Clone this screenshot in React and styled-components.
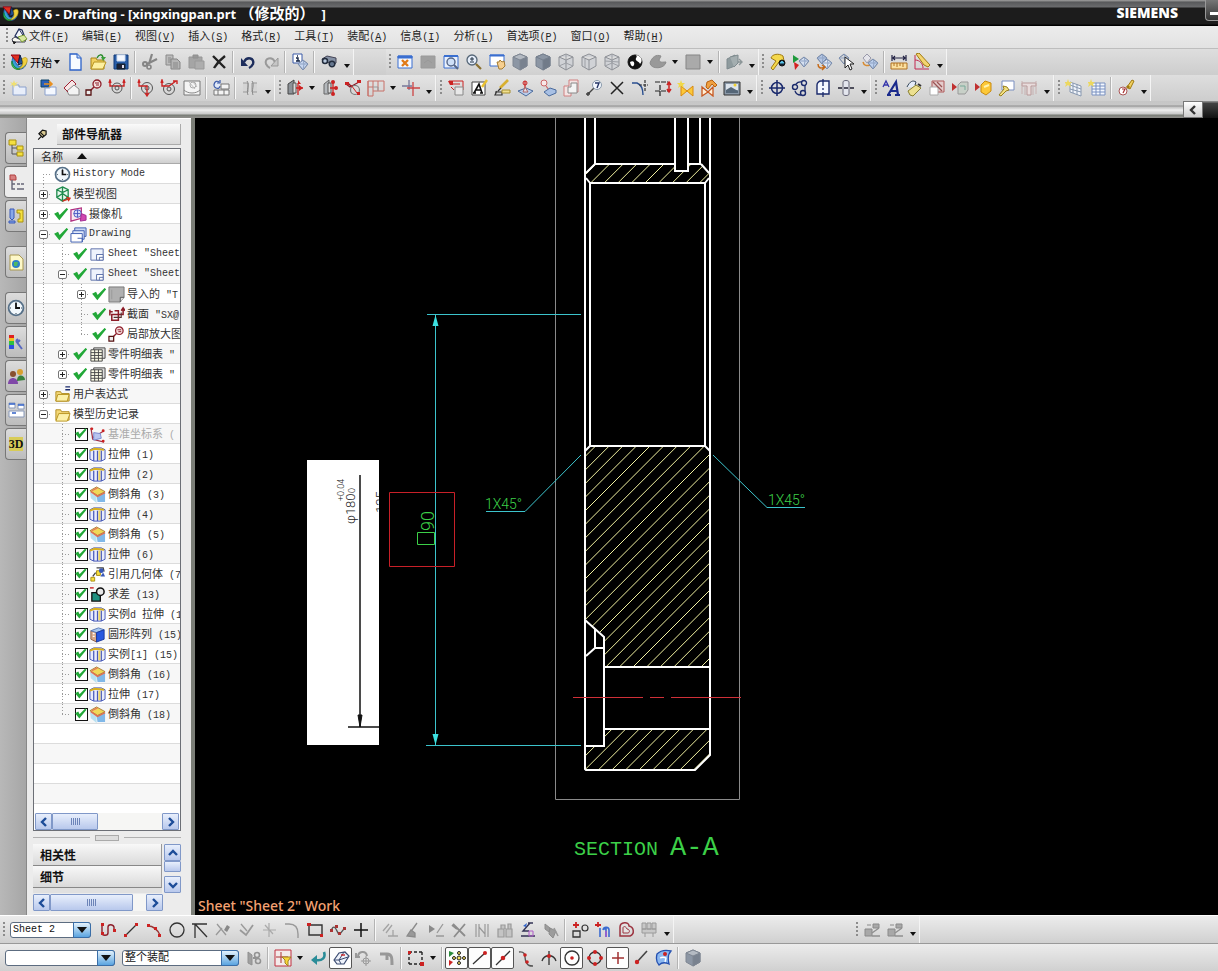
import React from "react";
import styled, { createGlobalStyle, css } from "styled-components";

const GlobalStyle = createGlobalStyle`
  *, *::before, *::after { box-sizing: border-box; }
  body { margin: 0; background: #d4d4d4; }
  button, select, input { font: inherit; margin: 0; padding: 0; }
  ul { list-style: none; margin: 0; padding: 0; }
`;

const MONO = '"Liberation Mono", "Noto Sans CJK SC", monospace';
const CJK = '"Noto Sans CJK SC", sans-serif';

/* ---------- icon set: each entry is a list of [path, stroke, fill, stroke width] ---------- */
const K = "#222", G = "#999", N = "none", R = "#c22", B = "#235", BL = "#3a6fd0", Y = "#e8c030", W = "#fff", LB = "#b8cdec";
const MR = "#8c1c28";
const circ = (x, y, r) => `M${x - r} ${y}a${r} ${r} 0 1 0 ${2 * r} 0a${r} ${r} 0 1 0 ${-2 * r} 0z`;
const cube = (edge, top, left, right) => [
  ["M9 1l7 3v9l-7 4-7-4V4z", edge, left],
  ["M9 7l7-3v9l-7 4z", edge, right],
  ["M9 1l7 3-7 3-7-3z", edge, top],
];
const wire = (extra) => [["M9 1l7 3v9l-7 4-7-4V4zM2 4l7 3 7-3M9 7v10", "#8d9096", "#d0d2d6"], [extra, "#9da0a6", N]];
const diamond = (x, y, fill) => [
  [`M${x} ${y - 5}l5 4-5 6-5-6z`, "#667a9c", fill],
  [`M${x} ${y - 5}l1 4-1 6M${x - 5} ${y - 1}h10`, "#8fa3c4", N],
];
const sheetIcon = [["M2 3h13v12H2z", "#5a6fa8", "#eef2fc"], ["M8 9h7v6H8zM11 12h4M11 12v3", "#5a6fa8", "#fff"]];

const ICONS = {
  nx: [
    ["M3 4c-2 5-1 10 5 12 5 1 9-3 8-8l-4 3c-1 3-3 3-5 1z", "#2460b0", "#38a0d8"],
    ["M1 2l9 0-2 8z", "#901", "#e03020"],
    ["M10 2l3 8-5 2z", "#124", "#245090"],
    ["M12 6c4-3 6-1 5 3s-6 8-11 7c6-1 8-5 6-10z", "#a80", "#f0d040", 0.6],
    ["M2 8c-2 5 3 10 8 8-4 0-7-3-8-8z", "#072", "#40b860", 0.6],
  ],
  modeMenu: [
    ["M2 12l3-2 4 2 7 0-1 3H3z", "#445", "#f8f8f0"],
    ["M5 9l4-7 3 1 2 5-4 4z", "#22305c", "#f4f6fc", 1.3],
    ["M9 2l5 8", "#22305c", N],
    ["M8 10l6-2 3 4-5 3z", "#7a9a38", "#d8e8a0"],
    ["M3 14l1 3 2-2", "#222", "#222"],
  ],
  doc: [["M4 1h7l4 4v12H4z", "#2c62c8", "#f8fbff", 1.3], ["M11 1v4h4", "#2c62c8", "#bcd2f4"]],
  folder: [
    ["M2 5h5l1 2h7v9H2z", "#a88418", "#f0d060"],
    ["M5 9h12l-3 7H2z", "#b89420", "#fdf0a0"],
    ["M8 5c2-4 5-4 6-1", "#2a8a2a", N, 1.5], ["M12 4h5l-3 4z", N, "#3aa03a"],
  ],
  save: [["M2 2h14v14H2z", "#123a78", "#2a5ea8"], ["M5 2h8v6H5z", "#cfdcf0", "#f4f8ff"], ["M5 11h8v5H5z", "#123", "#223"], ["M10 12h2v3h-2z", N, "#dde"]],
  cut: [["M11 1L8 11M16 6L6 11", "#858585", N, 2.2], [circ(4, 11, 2), "#858585", N, 2], [circ(8, 14, 2), "#858585", N, 1.6]],
  copy: [["M2 2h7v10H2z", "#8a8a8a", "#bcbcbc"], ["M4 5h3M4 7h3M4 9h3", "#888", N], ["M7 6h6l3 3v7H7z", "#858585", "#b4b4b4"], ["M9 10h5M9 12h5M9 14h5", "#888", N]],
  paste: [["M2 4h13v11H2z", "#979797", "#a5a5a5"], ["M6 2h5v3H6z", "#909090", "#999"], ["M8 8h9v8H8z", "#999", "#adadad"]],
  del: [["M3 3l12 12M15 3C11 6 7 10 4 15", "#222", N, 2.4]],
  undo: [["M5 9c3-6 11-4 9 2-1 2-2 3-4 4", "#1d2d5c", N, 2.4], ["M2 5v8h7z", N, "#1d2d5c"]],
  redo: [["M13 9C10 3 2 5 4 11c1 2 2 3 4 4", "#999", N, 2], ["M16 5v8H9z", "#999", "#c6c6c6"]],
  info: [["M2 1h9v9H2z", "#3a5aa8", "#fff"], ["M6 3h1M5 5h2v3M5 8h4", "#124", N, 1.4], ...diamond(12, 12, "#c6d6f0")],
  find: [["M2 6l5-3 9 2v5l-3 2-3-3-4 1-3-1z", "#445", "#8490a4"], [circ(5, 8, 2.5), "#222c3c", "#b8c8dc", 1.5], [circ(12, 11, 2.8), "#222c3c", "#667890", 1.5]],
  fit: [["M2 3h14v12H2z", "#3a6fd0", "#f4f8ff"], ["M2 3h14v2H2z", BL, BL], ["M6 7l6 6M12 7l-6 6", "#e07a18", N, 2.4]],
  grayBox: [["M2 3h14v12H2z", "#9a9a9a", "#a0a0a0"], ["M5 10l4-3 4 3", "#999", N]],
  zoomWin: [["M2 3h14v12H2z", BL, "#e8f0fc"], [circ(9, 9, 4), "#568", "#cfe0f8", 1.4], ["M12 12l4 4", "#568", N, 2], ["M2 3h14", BL, N, 2]],
  zoom: [[circ(7, 7, 5), "#567", "#e6eefa", 1.3], ["M7 4v4M5 6h4M5 9h4", "#234", N], ["M11 11l5 5", "#8a7030", N, 2.2]],
  pan: [["M2 2h14v11H2z", BL, "#fff"], ["M2 2h14v1H2z", BL, BL], ["M9 9l2 0 1-2 2 2 2-1 1 5-3 3h-3z", "#a67c30", "#f6cf90"]],
  cubeA: cube("#7e8692", "#b4bac2", "#8c96a4", "#79828f"),
  cubeB: cube("#76808e", "#8c96a4", "#8c96a4", "#717b89"),
  wireA: wire("M9 1v9M2 13l7-3 7 3"),
  wireB: wire("M5 6v9"),
  wireC: wire("M9 1v9M2 13l7-3 7 3M2 8l14 1"),
  yin: [[circ(9, 9, 7), "#111", "#111"], ["M10 2c6 1 7 6 4 9-1-3-3-2-4-4s2-3 0-5z", N, W], ["M4 9c3-2 5 0 4 3-1 2-3 2-4-3z", N, W]],
  blob: [["M1 10C3 4 7 1 12 3L10 7c1 3 3 2 7 2-1 7-15 8-16 1z", "#8c8c8c", "#999"]],
  square: [["M2 2h14v14H2z", "#858585", "#aaa"]],
  section: [["M2 6l8-4v11l-8 3z", "#7e8a8e", "#8f9b9e"], ["M9 9h8M14 6l3 3-3 3", "#8c9698", N, 1.4], ["M5 4l8-2v8l-4 4", "#7e8a8e", "#a4aeb0"]],
  wrench: [["M2 5c1-4 8-5 12-2l1 5-5 1-6 8-2-2 5-7z", "#a07a10", "#f4d84c"], [circ(13, 10, 3), "#111", "#123"], ["M11 10h4l-2-2z", "#5bd", "#6cf", 1]],
  run: [["M1 2l6 4-6 4z", N, "#1e9a3c"], ["M2 9l5 3-4 5z", N, "#d42020"], ...diamond(12, 9, "#d4dff0")],
  swap: [...diamond(7, 6, "#b4c6e4"), ...diamond(12, 11, "#dfe7f4"), ["M3 11c0 4 3 5 6 3M7 12l3 2-3 3", "#c66a18", N, 1.5]],
  pick: [...diamond(6, 6, "#d8d8d8"), ["M7 4v11l3-3 2 5 2-1-2-5h4z", "#222", "#fff"]],
  swap2: [["M6 1l4 4-4 5-4-5z", "#99a", "#e4e4ea"], ["M2 9c1 4 4 4 7 3", "#d88a30", N, 1.5], ...diamond(12, 11, "#bcd0ee")],
  measure: [["M2 2v6M16 2v6M2 5h14M5 3L3 5l2 2M13 3l2 2-2 2", "#224", N, 1.2], ["M1 10h16v6H1z", "#b07020", "#fbe0a0"], ["M4 10v3M7 10v4M10 10v3M13 10v4", "#b07020", N]],
  angle: [["M2 2v14h14M2 7c5 0 8 4 8 8", "#c22850", N], ["M3 1l3-1 11 12-2 2-4-2z", "#a07a10", "#f4d470"]],
  /* second row */
  sheetNew: [["M3 6h6v2h7v8H3z", "#8aa0cc", "#e8eefa"], ["M4 1l1 3 3-1-2 2 2 2-3-1-1 3-1-3-3 1 2-2-2-2 3 1z", N, "#f0e070"]],
  viewAdd: [["M2 1h8v7H2z", "#146", "#2a60b8"], ["M5 5h7M10 2l3 3-3 3", "#e89020", N, 1.6], ["M6 9h5v-1h6v8H6z", "#8aa0cc", "#f4f8ff"]],
  projView: [["M2 9l8-8 4 4-8 8z", "#a02030", "#f8e8e8"], ["M5 12l7-6 5 4v6H7z", "#888", "#f4f4f4"], ["M2 9l4 4", "#a02030", N]],
  detail: [[circ(12, 5, 4), MR, "#f4dede", 1.3], ["M9 8l-4 4", MR, N, 1.4], ["M1 11h5v5H1z", "#511", "#eee", 1.3], ["M10 4h4M11 6h3", MR, N]],
  secA: [["M2 3v4h14V3M1 4l1-3 1 3M15 4l1-3 1 3", R, N, 1.4], [circ(9, 9, 5), "#555", N], [circ(9, 9, 2), "#555", N]],
  secB: [[circ(10, 9, 5.5), "#555", N], [circ(10, 9, 2), "#555", N], ["M2 2v5h8v9M1 4l1-3 1 3M8 14l2 3 2-3", R, N, 1.3]],
  secC: [[circ(9, 10, 5.5), "#555", N], [circ(9, 10, 2), "#555", N], ["M2 2v5h7l7-5M13 2h4v3M1 4l1-3 1 3", R, N, 1.4]],
  breakout: [["M1 2h16v14H1z", "#777", "#f4f4f4"], ["M1 11c4 4 12 4 16 0", "#888", N], [circ(10, 6, 3), "#aaa", N], ["M6 3l6 7M10 3l4 5", "#bbb", N]],
  update: [["M7 3c-4-3-7 4-3 6 2 1 4 0 4-2M8 1v3H5", "#3a5aa8", "#dfe8f8", 1.2], ["M9 5h8v5H9zM2 11h15v5H2zM6 11v5M12 11v5", "#777", "#f4f4f4"]],
  brk: [["M2 4h5v9H2M16 4h-5v9h5", "#999", "#d4d4d4"], ["M6 2c3 4-1 9 1 14M11 2c3 4-1 9 1 14", "#888", N]],
  dimA: [["M2 5l6-4v14H2z", "#444", "#8c9298"], ["M7 4h3v10H7z", "#555", "#dcdcdc"], ["M12 4v12M10 9h7", R, N, 1.3], ["M12 1l3 4h-3zM13 6l4 3-4 3z", N, R]],
  dimB: [["M3 5l5-4v14H3z", "#666", "#b4b8bc"], ["M7 4h3v10H7z", "#555", "#dcdcdc"], ["M12 3v12M9 9h7", R, N, 1.3], [circ(12, 3, 2), N, R], [circ(15, 9, 2), N, R], [circ(12, 15, 2), N, R]],
  radius: [["M2 5l4 3 9-5M4 4l4 4", MR, N, 1.2], [circ(11, 11, 4.5), "#777", N, 1.2], ["M13 14l-6-8", R, N], ["M1 3h4v3H1zM13 1h4v3h-4zM13 13h3v3h-3z", N, R]],
  ordinate: [["M1 2h16v10H6v5H1zM1 8h5M6 2v10M1 2v15M11 2v10", "#c87068", N], ["M6 8h5v4", "#999", N]],
  crosshair: [["M7 1v10M0 7h10", "#779", N, 1.3], ["M11 3v14M5 9h13", "#c44", N, 1.3]],
  note: [["M2 2h14v9H9M5 5h8M4 8l3 3", R, N], ["M8 8h8v8H8z", "#888", "#e8e8e8"], ["M1 2h5v4H3z", N, R]],
  textA: [["M2 3h13v13H2z", "#444", "#fff"], ["M4 14l5-9 3 9M6 11h5M3 14h3M10 14h3", "#111", N, 1.6], ["M17 1l-5 7", Y, N, 2.4]],
  pencil: [["M15 1L7 9", "#d8b030", N, 2.6], ["M2 13h7v3H2l2-4M8 9l-3 3", "#333", N, 1.2], ["M9 11h8v3H9z", "#a89030", "#f0e090"]],
  datum: [["M2 12l8-3 7 3-7 5z", "#4a6a9c", "#b8ccec"], ["M9 2v9", R, N, 1.2], [circ(9, 4, 2), R, N], ["M7 13l2-5 3 5z", "#a66", "#e8e0e8"]],
  balloon: [[circ(5, 4, 3), "#c66", "#f8e8e8"], ["M7 7l3 4", "#c66", N, 1.2], ["M5 13l6-4 6 2v3l-7 3z", "#4a6a9c", "#a8c0e4"]],
  area: [["M2 7h5V1h9v12H9v4H2z", "#d08080", "#f4e4e4"], ["M6 8h3V4h6v10H6z", "#888", "#f4f4f4"]],
  ident: [["M2 16l8-8M1 15h4M3 13v4", "#444", N, 1.4], [circ(12, 6, 4.5), "#89a", "#f4f8ff"], ["M10 4h4l-2 5", "#236", N, 1.4]],
  cross: [["M3 3l12 12M15 3L3 15", "#222", N, 1.5]],
  trim: [["M1 4h5c5 2 6 6 6 12", "#2a4f90", N, 1.4], ["M14 1v11M8 6h9", "#333", N, 1.2, "3 1"]],
  sym: [["M1 3h13M1 12h14M6 6v11", "#222", N, 1.2, "5 1"], ["M15 3v10M13 6l2-3 2 3M13 10l2 3 2-3", R, N, 1.5]],
  weld: [["M4 7l6 5-6 5zM16 7v10l-6-5z", "#d88a10", "#fcc838"], ["M4 1l1 3h3L6 6l1 3-3-2-3 2 1-3-2-2h3z", N, "#f0d848"]],
  hammer: [["M2 8l6 5-6 4zM13 8v9l-5-4z", "#c85820", "#fff0d8", 1.3], ["M7 3l5-2 5 5-2 2-3-3-4 5-2-2z", "#b86010", "#f0a040"]],
  image: [["M1 3h16v13H1z", "#333", "#8a98a8"], ["M3 5h12v6H3z", N, "#dde4ec"], ["M3 11l5-3 7 4v2H3z", N, "#567"], [circ(12, 6, 1.5), N, "#f0d030"]],
  center: [[circ(9, 9, 5.5), "#1a2a6c", N, 1.5], ["M9 1v16M1 9h16", "#1a2a6c", N, 1.5]],
  bolt: [["M5 5a6 6 0 0 1 6-2M4 12a6 6 0 0 0 6 4M14 6v6", "#1a2a6c", N, 1.3], [circ(4, 8, 2.5), "#1a2a6c", N, 1.4], [circ(13, 4, 2.5), "#1a2a6c", N, 1.4], [circ(12, 14, 2.5), "#1a2a6c", N, 1.4]],
  symline: [["M3 15V6c0-2 2-4 4-4h8v13z", "#1a2a6c", "#f4f8ff", 1.4], ["M9 0v7M9 9v2M9 13v5", "#1a2a6c", N, 1.3]],
  cyl: [["M6 3c0-2 6-2 6 0v12c0 2-6 2-6 0z", "#667", "#e4e6ee"], ["M1 9h4M7 9h4M13 9h4", "#223", N, 1.4]],
  fontA: [["M1 8l3-6 3 6M2 6h4", "#33a", N, 1.3], ["M6 16l8-13 2 13M9 12h7M5 16h4M13 16h5", "#1a2a8c", N, 2.2]],
  styleW: [["M2 8c3-6 6-7 9-5l-1 3 3 2", "#345", "#e4ecf8"], ["M3 12l8-6 5 3-8 8-3-1z", "#888030", "#ece090"], ["M13 5l3 2", "#333", N, 2]],
  sheetEd: [["M4 2h12v11H4z", "#b05858", "#e4cccc"], ["M2 8h8v8H2z", "#aaa", "#fff"], ["M5 3l9 9M9 3l5 5", "#955", N, 1.3]],
  camA: [["M1 4l5 4-5 4z", N, "#c03030"], ["M7 6l3-3h7v8l-3 4H7z", "#999", "#c8d0c8"], ["M9 7h5v4", "#7a9", N]],
  camB: [["M1 4l5 4-5 4z", N, "#c03030"], ["M7 6l4-4 6 2v8l-5 4-5-3z", "#c88a10", "#fcc838"], ["M10 8l5-2", "#fff3b0", N, 2]],
  wrenchB: [["M5 2h12v9H5z", "#7a8fc0", "#fff"], ["M2 16l5-6-1-3 4 1 2 3-3 1-5 5z", "#98801c", "#f4e080"]],
  tee: [["M2 4h14v3h-5v9H7V7H2z", "#b89898", "#e8dcdc"], ["M2 2v13M16 2v13M5 8v8M13 8v8", "#c8b0b0", N]],
  tabA: [["M5 3l11 4v10L5 13zM8 4v10M12 5v11M5 6l11 4M5 10l11 3", "#8898b0", "#f0f4fa"], ["M3 0l1 3 3 0-2 2 1 3-3-2-3 2 1-3-2-2h3z", N, "#ecd860"]],
  tabB: [["M4 4h13v12H4zM4 7h13M4 10h13M4 13h13M8 4v12M12 4v12", "#7890c0", "#f4f8ff"], ["M3 0l1 3 3 0-2 2 1 3-3-2-3 2 1-3-2-2h3z", N, "#ecd860"]],
  paintQ: [["M10 8l5-7 2 1-4 8z", "#a07a10", "#f0d060"], [circ(6, 12, 4), "#a55", "#fff"], ["M5 10h3l-2 4", "#a33", N, 1.2], ["M10 9l2-2", "#a07a10", N, 3]],
  /* sketch toolbar */
  profile: [["M3 3v9c0 3 6 3 6 0V6c0-3 5-3 6 0v3", MR, N, 1.4], ["M2 2h3v3H2zM2 11h3v3H2zM14 8h3v3h-3z", N, R]],
  line: [["M3 15L15 3", "#333", N, 1.3], ["M2 13h3v3H2zM13 2h3v3h-3z", N, R]],
  arc: [["M3 5c6 0 9 3 12 9", "#933", N, 1.3], ["M2 3h3v3H2zM9 6h3v3H9zM13 13h3v3h-3z", N, R]],
  circle: [[circ(9, 9, 7), "#333", N, 1.3]],
  corner: [["M1 3h15M4 3v14M4 3l12 13", "#333", N, 1.3]],
  grayTrim: [["M3 3l9 11M2 14l6-7", "#999", N, 1.3], ["M10 9l3-5 3 2-3 5z", N, "#888"]],
  grayExt: [["M3 9l6 5 7-10", "#999", N, 1.8], ["M4 3l6 7", "#999", N, 1.3]],
  grayCross: [["M9 2v14M3 9h13M5 4l8 9", "#aaa", N, 1.2]],
  fillet: [["M2 3h4c6 0 9 4 9 10v4", "#999", N, 1.4]],
  rect: [["M3 4h13v10H3z", "#333", N, 1.4], ["M1 2h4v3H1zM14 13h3v3h-3z", N, R]],
  spline: [["M2 10c3-8 5-2 7 2s4-3 7-5", "#555", N, 1.3], ["M1 8h3v3H1zM6 4h3v3H6zM9 11h3v3H9zM14 6h3v3h-3z", N, "#a33"]],
  plus: [["M9 2v14M2 9h14", "#111", N, 1.5]],
  par: [["M2 10l6-7M5 12l6-8M7 15h10M12 15V9", "#a4a4a4", N, 1.3]],
  con1: [["M3 15l4-6 4 3v4zM8 9l5-7", "#8a8a8a", "#999", 1.3]],
  con2: [["M2 4l6 4-6 4z", N, "#8a8a8a"], ["M16 3l-6 9M9 15h8", "#999", N, 1.3]],
  con3: [["M3 3l12 12M15 3L4 16M2 4l5 4", "#8c8c8c", N, 1.8]],
  con4: [["M3 3v13M6 3v13M12 3v13M15 3v13M6 6l6 7", "#999", "#bbb", 1.2]],
  con5: [["M2 8h6v8H2zM10 8h6v8h-6zM5 8V4h4v4M12 8V3h3v5", "#999", "#c4c4c4", 1.2]],
  con6: [["M11 2L4 10h6M9 2h5M2 15h14", "#335", N, 1.4], ["M10 10h4v5h-4z", "#b05ac8", N], ["M4 5l4-3-1 4z", N, "#36c"]],
  con7: [["M3 3l5 4-1 4-4-3zM8 7l6 3-3 7-4-4z", "#8c8c8c", "#9c9c9c"], ["M12 7l4 8", "#999", N, 1.5]],
  add1: [["M5 1v6M2 4h6", R, N, 1.8], ["M2 10h7v6H2z", "#333", N, 1.3], [circ(14, 7, 3), "#333", N, 1.2]],
  add2: [["M4 1v5M1 4h6", R, N, 1.8], ["M6 7v9M9 8h3v8M15 16V9c0-3-5-4-6 0", "#3a6ad0", N, 1.6], ["M12 10v6", "#a5c", N, 1.4]],
  offset: [["M3 15V6c0-5 9-6 9-1 5 1 6 8 1 10z", "#9c3440", N, 1.5], ["M6 12V7c0-2 3-2 4 1 3 0 3 4 1 4z", "#9c3440", "#e4e4e4"]],
  grayHatch: [["M2 2h4v6H2zM7 2h4v6H7zM12 2h4v6h-4zM2 8h14v4H2zM5 12v4M13 12v4", "#9a9a9a", "#c8c8c8"]],
  anim: [["M2 8h7v7H2zM4 4h4M10 3h6v4h-6z", "#8a8a8a", "#a8a8a8"], ["M9 12l7-5M9 15h8", "#909090", N, 1.5]],
  /* selection toolbar */
  links: [["M3 3v11l4 2V6z", "#909090", "#a0a0a0"], [circ(12, 6, 2.5), "#929292", N, 1.6], [circ(13, 12, 2.5), "#929292", N, 1.6], ["M8 9h3", "#929292", N, 2]],
  selRect: [["M1 1h16v16H1z", "#c03040", "#f4eaea"], ["M7 3v11M2 8h12", "#a33", N], ["M8 8h9l-3 4v5l-3-3v-3z", "#a08020", "#f8d838"]],
  back: [["M15 3c2 6-2 9-8 8", "#2a8c98", N, 2.6], ["M8 6v10l-6-5z", N, "#2a8c98"]],
  eraser: [["M2 11l5-7 6-1 4 4-5 8H5z", "#3a4a70", "#eef2fa", 1.2], ["M2 11h5l5-8M7 11l2 4M7 11l9-3", "#3a4a70", N], ["M9 6l4 0", R, N, 1.4]],
  rot: [["M3 8c0-6 8-7 9-1M5 8H1V4", "#999", N, 2], [circ(11, 12, 3), "#999", N], ["M11 7v10M6 12h10", "#999", N]],
  hookG: [["M2 5h7c5 0 5 4 5 11M9 5v6", "#989898", N, 3]],
  marquee: [["M2 3h13M2 3v12M15 3v12M2 15h13", "#222", N, 1.4, "3 2"], ["M13 13h4v4h-4zM1 2h3v3H1z", N, R]],
  snap: [["M1 2l5 2-5 4z", N, "#2a8a3a"], ["M1 11l4 2-4 4z", N, "#c22"], [circ(11, 9, 2), "#222", "#f8e060"], [circ(11, 4, 1.5), "#222", "#f8e060"], [circ(11, 14, 1.5), "#222", "#f8e060"], [circ(6, 9, 1.5), "#222", "#f8e060"], [circ(16, 9, 1.5), "#222", "#f8e060"]],
  endPt: [["M2 15L14 4", "#333", N, 1.3], [circ(14, 4, 2), N, R]],
  midPt: [["M2 16L16 2", "#333", N, 1.3], [circ(9, 9, 2.3), N, R]],
  tan: [["M2 3c8-1 5 6 7 10s4 4 7 4", "#555", N, 1.4], [circ(8, 6, 1.8), N, R], [circ(10, 13, 1.8), N, R]],
  inter: [["M9 2v14M2 12c2-7 12-7 14 0", "#333", N, 1.3], [circ(9, 7, 2), N, R]],
  cen: [[circ(9, 9, 7), "#333", N, 1.4], [circ(9, 9, 1.8), N, R]],
  quad: [[circ(9, 9, 6), "#333", N, 1.3], [circ(9, 3, 2), N, R], [circ(9, 15, 2), N, R], [circ(3, 9, 2), N, R], [circ(15, 9, 2), N, R]],
  exist: [["M9 3v12M3 9h12", "#a03030", N, 1.5]],
  onCurve: [["M15 2L5 13", "#444", N, 1.6], [circ(5, 13, 2.2), N, R]],
  face: [["M2 5C6 1 12 1 16 2c-3 3-3 9-2 13-4-2-8-1-10 1C1 13 1 9 2 5z", "#2450b0", "#8cb8f0", 1.3], [circ(10, 5, 2), N, R], ["M5 9c2-1 4-1 6 0l-1 4", "#fff", N, 1.3]],
  /* navigator */
  clock: [[circ(9, 9, 7.4), "#567088", "#f2f8fc", 1.8], ["M9 4v5h4", "#111", N, 1.8], ["M9 3v1M9 14v1M3 9h1M14 9h1", "#345", N]],
  modelView: [["M9 1l6 3v8l-6 4-6-4V4zM3 4l6 3 6-3M9 7v9M3 12l6-4 6 4M9 1v7", "#1e8a4c", "#e8f8ee", 1.4], ["M9 16l8-3M13 12l4 1-2 3", "#d03020", N, 1.4]],
  camera: [["M1 4l11-2v11L1 16z", "#b03080", "#fbe8f0", 1.3], [circ(8, 8, 4), "#4a58c0", "#d8dcf8"], ["M4 8h7M8 4v8", "#4a58c0", N], ["M12 8l5 2v5l-6 1z", "#a02890", "#d048b0"]],
  drawing: [["M5 2h12v9H5z", "#3c5cb0", "#c8d6f2"], ["M3 5h12v9H3z", "#3c5cb0", "#dfe8fa"], ["M1 8h12v9H1z", "#3c5cb0", "#fff"], ["M8 13h5v4", "#3c5cb0", N]],
  sheet: sheetIcon,
  imported: [["M1 1h16v11l-4 5H1z", "#777", "#b0b0b0"], ["M17 12h-4v5", "#555", "#ddd"], ["M4 4v10", "#999", N]],
  secView: [["M2 6h3M2 4v6M4 9h7v6H4zM11 9h5V3M14 5l2-3 2 3M11 9V5H7", MR, N, 1.6], ["M6 12h8V7", "#533", N, 1.2]],
  table: [["M5 2h12v11H5z", "#444", "#ddd"], ["M2 4h12v12H2zM2 7h12M2 10h12M2 13h12M6 4v12M10 4v12", "#444", "#fdfde8"]],
  expr: [["M2 6h5l1 2h8v8H2z", "#b08c20", "#f4d878"], ["M4 9h12l-2 7H2z", "#b89420", "#fcf0a8"], ["M12 1h5M12 4h5", "#1a2a6c", N, 1.4]],
  hist: [["M2 4h5l1 2h8v9H2z", "#b08c20", "#f4d878"], ["M5 8h12l-3 8H2z", "#b89420", "#fcf0a8"]],
  csys: [["M2 2l2 12 12 3M3 13l13-8", "#a03048", N, 1.3], ["M5 7l7 1 1 5-8 2z", "#7a88d0", "#b8c4f0"], [circ(3, 3, 1.5), N, R], [circ(15, 5, 1.5), N, R], [circ(15, 16, 1.5), N, R]],
  extrude: [["M1 4l4-2h8l4 2v10l-4 2H5l-4-2z", "#4658b8", "#e8ecfc"], ["M1 5l5-2 10 1", "#d8b020", N, 2], ["M5 5v11M9 5v11M13 5v11", "#4658b8", N, 1.3], ["M10 5h2v10h-2z", N, "#f0d860"]],
  chamfer: [["M1 6l7 5v7l-6-5z", N, "#b8e0f0"], ["M8 10l9-3v10H9z", N, "#80b8e8"], ["M1 5l7-4 9 5-8 4z", "#a88038", "#f0d858"], ["M2 6l7 5 8-4", "#e07050", N, 1.6], ["M3 5l6-3", "#e87858", N, 1.4]],
  refGeo: [["M2 12h4v4H2zM8 5h4v5H8z", "#a88c10", "#f8e040"], ["M8 2l7 0 1 4M4 11l3-4", "#444", N, 1.4], [circ(13, 5, 2.5), N, "#3858b8"], ["M12 11h5l-2-4z", N, "#3858b8"]],
  subtract: [["M3 7h9v9H3z", "#111", "#209080", 1.4], [circ(12, 6, 4), "#111", "#e8e8e8", 1.6], ["M1 2h4", R, N, 1.5]],
  pattern: [["M2 5l6 2v10l-6-3z", "#8a6048", "#d8a888"], ["M2 5l8-3 6 2-8 3z", "#5878b8", "#a8c8f0"], ["M8 7l8-3v10l-8 3z", "#1838a0", "#2858e0"], ["M4 8h2M4 11h2", "#fff", N, 1.5]],
  check: [["M2 9l4 5L15 3l-9 9-2-4z", "#22a838", "#22b03c", 2.4]],
  pin: [["M4 8l5-5 5 1 0 5-5 4z", "#111", "#d8c890", 1.6], ["M7 12l-4 4M6 6l5 5", "#111", N, 1.6]],
  /* resource tabs */
  asm: [["M2 1h7v5H2zM10 7h6v4h-6zM10 13h6v4h-6z", "#a89010", "#f4e040"], ["M5 6v9h5M5 9h5", "#555", N]],
  part: [["M3 2h5l1 2v3H3z", "#b04040", "#d88080"], ["M5 7v9h3M5 11h3M10 11h3M14 11h3M10 16h7", "#667", N, 1.4]],
  reuse: [["M3 2h4v9l-2 2-2-2zM2 14h6v2H2z", "#3858b8", "#88a8e8"], ["M10 3h6v12h-5v-3h2V6h-3z", "#a89010", "#f4e040"]],
  web: [["M3 2h9l4 4v11H3z", "#a89850", "#fdf8c8"], [circ(9, 11, 4), N, "#2c80c8"], ["M7 9l4 0-1 4-3 0z", N, "#50b860"]],
  roles: [["M2 2h5v3H2z", N, "#e02020"], ["M2 5h5v3H2z", N, "#f0c020"], ["M2 8h5v4H2z", N, "#30c040"], ["M2 12h5v4H2z", N, "#3050e0"], ["M9 8l6 8M9 8l2-2M13 7l-3 3", "#5868c0", N, 2]],
  users: [[circ(6, 7, 3), N, "#885030"], ["M1 17c0-8 10-8 10 0z", N, "#8048a8"], [circ(13, 5, 3), N, "#d8a030"], ["M10 14c0-8 8-6 8-1z", N, "#38803c"]],
  winP: [["M2 2h6v5H2zM11 3h6v5h-6zM2 10h15v6H2z", "#8898b8", "#fff"], ["M2 3h6M11 4h6M5 12h4", "#3060c8", N, 1.6]],
};

const Svg = styled.svg`
  display: block;
  flex: none;
  width: ${(p) => p.$size || 18}px;
  height: ${(p) => p.$size || 18}px;
`;

function Icon({ name, size }) {
  return (
    <Svg viewBox="0 0 18 18" $size={size} aria-hidden="true">
      {ICONS[name].map(([d, stroke, fill, w, dash], i) => (
        <path key={i} d={d} stroke={stroke} fill={fill} strokeWidth={w || 1} strokeDasharray={dash} />
      ))}
    </Svg>
  );
}

/* Chinese runs are set one size larger than the monospaced Latin beside them */
const Han = styled.span`
  font-family: ${CJK};
  font-size: 11px;
`;
function Mixed({ text }) {
  return text.split(/([\u4e00-\u9fff]+)/).map((part, i) => (i % 2 ? <Han key={i}>{part}</Han> : part));
}

/* ---------- frame ---------- */
const Window = styled.div`
  display: flex;
  flex-direction: column;
  min-height: 100vh;
  overflow: hidden;
  background: #d6d6d6;
  color: #222;
  font: 10px/16px ${MONO};
`;
const TitleBar = styled.header`
  display: flex;
  align-items: center;
  height: 26px;
  padding: 0 0 0 2px;
  background: linear-gradient(#999 0, #8a8a8a 1px, #58595b 2px, #6a6b6d 7px, #1c1c1c 8px, #1c1c1c 24px, #000 25px);
  color: #fff;
`;
const Title = styled.h1`
  flex: 1;
  margin: 0 0 0 3px;
  white-space: pre;
  font: bold 13px/20px "Noto Sans", "Noto Sans CJK SC", sans-serif;
`;
const TitleHan = styled.span`
  font-size: 15px;
`;
const Brand = styled.span`
  margin-right: 27px;
  font: 800 14px/20px "Open Sans", sans-serif;
`;
const Minimize = styled.button`
  align-self: flex-start;
  display: flex;
  align-items: flex-end;
  width: 13px;
  height: 21px;
  padding: 0 0 5px 4px;
  border: 1px solid #999;
  border-width: 0 0 1px 1px;
  border-radius: 0 0 0 4px;
  background: linear-gradient(#777, #333);
  &::after { content: ""; width: 8px; height: 3px; background: #fff; }
`;
const MenuBar = styled.nav`
  display: flex;
  align-items: center;
  gap: 13px;
  height: 23px;
  padding: 0 6px 2px 3px;
  border-bottom: 1px solid #bdbdbd;
  background: linear-gradient(#ececec, #e2e2e2);
`;
const MenuLead = styled.span`
  display: flex;
  align-items: center;
  margin-right: -12px;
`;
const MenuItem = styled.button`
  border: 0;
  background: none;
  color: #222;
  white-space: nowrap;
  line-height: 16px;
`;
const Bars = styled.div`
  display: flex;
  flex-direction: column;
`;
const Bar = styled.div`
  display: flex;
  height: 26px;
  background: linear-gradient(#dedede, #cdcdcd);
`;
const Group = styled.div`
  display: flex;
  align-items: center;
  flex: none;
  height: 26px;
  margin-left: ${(p) => p.$gap || 0}px;
  border-right: ${(p) => (p.$open ? 0 : 1)}px solid #f4f4f4;
  background: linear-gradient(#e4e4e4, #d0d0d0);
`;
const Grip = styled.span`
  flex: none;
  width: 7px;
  height: 16px;
  background: radial-gradient(circle at 1px 1px, #8c8c8c 1px, transparent 1px) 3px 0 / 4px 4px repeat-y;
`;
const Tool = styled.button`
  display: flex;
  align-items: center;
  justify-content: center;
  flex: none;
  width: 23px;
  height: 22px;
  border: 1px solid transparent;
  border-radius: 2px;
  background: none;
  ${(p) => p.$on && css`
    border-color: #555;
    background: #fdfdfd;
  `}
`;
const StartButton = styled(Tool)`
  width: 56px;
  justify-content: flex-start;
  gap: 2px;
  padding-left: 2px;
`;
const Caret = styled.span`
  width: 0;
  border: 3px solid transparent;
  border-top: 4px solid #111;
  border-bottom: 0;
`;
const Drop = styled.button`
  display: flex;
  justify-content: center;
  align-items: center;
  flex: none;
  width: ${(p) => (p.$end ? 13 : 12)}px;
  height: 22px;
  padding-top: ${(p) => (p.$end ? 8 : 0)}px;
  border: 0;
  background: none;
`;
const Divider = styled.span`
  flex: none;
  width: 6px;
  height: 22px;
  background: linear-gradient(90deg, transparent 2px, #b4b4b4 2px, #b4b4b4 3px, #f8f8f8 3px, #f8f8f8 4px, transparent 4px);
`;
const BarEdge = styled.div`
  display: flex;
  height: 17px;
  background: linear-gradient(#c6c6c6 0, #c8c8c8 4px, #8f8f8f 5px, #c2c2c2 6px, #dcdcdc 8px, #f0f0f0 9px, #d8d8d8 11px, #c8c8c8 13px, #777b74 14px, #8c8c88 16px);
  justify-content: flex-end;
`;
const Collapse = styled.button`
  width: 20px;
  height: 17px;
  border: 1px solid #777;
  background: linear-gradient(#fff, #ccc);
  display: grid;
  place-items: center;
`;
const EdgeEnd = styled.span`
  width: 15px;
  background: linear-gradient(#888 1px, #444 2px, #111);
`;

/* "|" divider, ">" drop arrow, "." overflow arrow, "*" prefix marks a pressed tool */
function Tools({ list }) {
  return list.split(" ").map((t, i) => {
    if (t === "|") return <Divider key={i} />;
    if (t === ">") return <Drop key={i} aria-label="More"><Caret /></Drop>;
    if (t === ".") return <Drop key={i} $end aria-label="Toolbar options"><Caret /></Drop>;
    const on = t[0] === "*";
    const name = on ? t.slice(1) : t;
    return <Tool key={i} $on={on} aria-label={name}><Icon name={name} /></Tool>;
  });
}

/* ---------- combo box ---------- */
const ComboBox = styled.span`
  position: relative;
  flex: none;
  width: ${(p) => p.$w}px;
  height: 16px;
  margin: 0 ${(p) => p.$after || 0}px 0 3px;
`;
const Select = styled.select`
  appearance: none;
  display: block;
  width: 100%;
  height: 16px;
  padding: 0 18px 0 2px;
  border: 1px solid #5c6c80;
  border-radius: 3px;
  background: #fff;
  color: #111;
  line-height: 14px;
  font-family: ${MONO};
  font-size: ${(p) => (p.$han ? 11 : 10)}px;
`;
const ComboArrow = styled.span`
  position: absolute;
  top: 0;
  right: 0;
  width: 18px;
  height: 16px;
  border: 1px solid #3a6ea8;
  border-radius: 0 3px 3px 0;
  background: linear-gradient(#e4f2fc, #5aa4e0);
  pointer-events: none;
  display: grid;
  place-items: center;
`;
const ComboTri = styled.span`
  border: 5px solid transparent;
  border-top: 6px solid #111;
  border-bottom: 0;
`;
function Combo({ w, value, label, after, han }) {
  return (
    <ComboBox $w={w} $after={after}>
      <Select aria-label={label} $han={han} defaultValue={value}><option>{value}</option></Select>
      <ComboArrow><ComboTri /></ComboArrow>
    </ComboBox>
  );
}

/* ---------- body ---------- */
const Body = styled.div`
  display: flex;
  flex: 1;
`;
const Rail = styled.div`
  flex: none;
  width: 27px;
  padding-top: 14px;
  background: linear-gradient(90deg, #b8b8b8, #a6a6a6);
  border-right: 1px solid #888;
  display: flex;
  flex-direction: column;
  align-items: flex-end;
  gap: 2px;
`;
const RailTab = styled.button`
  display: flex;
  align-items: center;
  justify-content: center;
  width: ${(p) => (p.$on ? 23 : 21)}px;
  height: 32px;
  margin: ${(p) => (p.$apart ? 12 : 0)}px ${(p) => (p.$on ? -1 : 0)}px 0 0;
  border: 1px solid #777;
  border-right: 0;
  border-radius: 4px 0 0 4px;
  background: ${(p) => (p.$on ? "#ececec" : "linear-gradient(#dcdcdc, #bcbcbc)")};
  font: 900 12px/14px "Liberation Serif", serif;
  color: #111;
`;
const ThreeD = styled.span`
  background: #d8cc58;
`;
const Panel = styled.aside`
  flex: none;
  display: flex;
  flex-direction: column;
  width: 164px;
  padding: 4px 10px 4px 6px;
  background: #ececec;
  border-top: 1px solid #fff;
`;
const PanelHead = styled.div`
  display: flex;
  align-items: center;
  gap: 7px;
  height: 22px;
  margin-bottom: 3px;
`;
const PinButton = styled.button`
  width: 17px;
  height: 18px;
  padding: 2px 0 2px 3px;
  border: 0;
  background: none;
`;
const PanelTitle = styled.h2`
  flex: 1;
  height: 21px;
  margin: 0;
  padding: 0 5px;
  border: 1px solid #aaa;
  border-width: 0 1px 1px 0;
  background: linear-gradient(#fafafa, #d8d8d8);
  font: bold 12px/20px ${CJK};
  color: #111;
`;
const TreeBox = styled.div`
  flex: 1;
  display: flex;
  flex-direction: column;
  border: 1px solid #6c6f76;
  background: #fff;
`;
const ColumnHead = styled.div`
  display: flex;
  align-items: center;
  gap: 14px;
  height: 15px;
  padding-left: 7px;
  border-bottom: 1px solid #aaa;
  background: linear-gradient(#fafafa, #cfcfcf);
`;
const SortUp = styled.span`
  border: 5px solid transparent;
  border-bottom: 6px solid #111;
  border-top: 0;
`;
const Rows = styled.ul`
  flex: 1;
  overflow: hidden;
  background: repeating-linear-gradient(#fff 0, #fff 19px, #dcdcdc 19px, #dcdcdc 20px, #f7f7f7 20px, #f7f7f7 39px, #dcdcdc 39px, #dcdcdc 40px);
`;
const Row = styled.li`
  display: flex;
  align-items: center;
  height: 20px;
  white-space: pre;
  overflow: hidden;
  color: ${(p) => (p.$dim ? "#aaa" : "#333")};
`;
const dots = "repeating-linear-gradient(#999 0, #999 1px, transparent 1px, transparent 3px)";
const dotsX = "repeating-linear-gradient(90deg, #999 0, #999 1px, transparent 1px, transparent 3px)";
const Guide = styled.span`
  flex: none;
  width: 19px;
  height: 20px;
  background: ${(p) => (p.$line ? `${dots} 9px 0 / 1px 20px no-repeat` : "none")};
`;
const Knot = styled.span`
  display: flex;
  align-items: center;
  flex: none;
  width: 20px;
  height: 20px;
  padding-left: 5px;
  background:
    ${dots} 9px ${(p) => (p.$edge === "first" ? 10 : 0)}px / 1px ${(p) => (p.$edge ? 10 : 20)}px no-repeat,
    ${dotsX} 9px 10px / 9px 1px no-repeat;
`;
const Toggle = styled.button`
  position: relative;
  width: 9px;
  height: 9px;
  border: 1px solid #777;
  border-radius: 2px;
  background: #fff;
  &::before, &::after { content: ""; position: absolute; background: #222; }
  &::before { left: 1px; top: 3px; width: 5px; height: 1px; }
  &::after { left: 3px; top: 1px; width: 1px; height: ${(p) => (p.$open ? 0 : 5)}px; }
`;
const Slot = styled.span`
  flex: none;
  width: ${(p) => p.$w}px;
`;
const TickLabel = styled.label`
  position: relative;
  display: block;
  flex: none;
  width: 16px;
  height: 16px;
  padding: 2px 0 0 2px;
`;
const Tick = styled.input`
  appearance: none;
  display: block;
  width: 13px;
  height: 13px;
  border: 1px solid #111;
  background: #fff;
`;
const TickMark = styled.span`
  position: absolute;
  left: 2px;
  top: 1px;
  pointer-events: none;
`;

/* [guides, toggle, mark, icon, text, edge]: mark "c" = status check, "b" = tick box */
const TREE = [
  ["", "", "", "clock", "History Mode", "first"],
  ["", "+", "", "modelView", "模型视图"],
  ["", "+", "c", "camera", "摄像机"],
  ["", "-", "c", "drawing", "Drawing"],
  ["|", "", "c", "sheet", 'Sheet "Sheet'],
  ["|", "-", "c", "sheet", 'Sheet "Sheet'],
  ["||", "+", "c", "imported", '导入的 "T'],
  ["||", "", "c", "secView", '截面 "SX@'],
  ["||", "", "c", "detail", "局部放大图", "last"],
  ["|", "+", "c", "table", '零件明细表 "'],
  ["|", "+", "c", "table", '零件明细表 "', "last"],
  ["", "+", "", "expr", "用户表达式"],
  ["", "-", "", "hist", "模型历史记录", "last"],
  [" ", "", "b", "csys", "基准坐标系 ("],
  [" ", "", "b", "extrude", "拉伸 (1)"],
  [" ", "", "b", "extrude", "拉伸 (2)"],
  [" ", "", "b", "chamfer", "倒斜角 (3)"],
  [" ", "", "b", "extrude", "拉伸 (4)"],
  [" ", "", "b", "chamfer", "倒斜角 (5)"],
  [" ", "", "b", "extrude", "拉伸 (6)"],
  [" ", "", "b", "refGeo", "引用几何体 (7"],
  [" ", "", "b", "subtract", "求差 (13)"],
  [" ", "", "b", "extrude", "实例d 拉伸 (1"],
  [" ", "", "b", "pattern", "圆形阵列 (15)"],
  [" ", "", "b", "extrude", "实例[1] (15)"],
  [" ", "", "b", "chamfer", "倒斜角 (16)"],
  [" ", "", "b", "extrude", "拉伸 (17)"],
  [" ", "", "b", "chamfer", "倒斜角 (18)", "last"],
];

function TreeRow({ row: [guides, toggle, mark, icon, text, edge] }) {
  return (
    <Row $dim={icon === "csys"}>
      {guides.split("").map((g, i) => <Guide key={i} $line={g === "|"} />)}
      <Knot $edge={edge}>
        {toggle && <Toggle $open={toggle === "-"} aria-label={toggle === "-" ? "Collapse" : "Expand"} />}
      </Knot>
      {mark === "c" && <Slot $w={16}><Icon name="check" size={16} /></Slot>}
      {mark === "b" && (
        <TickLabel aria-label={text}>
          <Tick type="checkbox" aria-label={text} defaultChecked />
          <TickMark><Icon name="check" size={13} /></TickMark>
        </TickLabel>
      )}
      <Slot $w={19}><Icon name={icon} size={17} /></Slot>
      <span><Mixed text={text} /></span>
    </Row>
  );
}

/* ---------- scroll bars ---------- */
const HScroll = styled.div`
  display: flex;
  height: 17px;
  margin: 0 1px;
  background: #f6f6f4;
`;
const scrollFace = css`
  border: 1px solid #8098c8;
  border-radius: 1px;
  background: linear-gradient(#e8effc, #b8c8ec);
`;
const ScrollButton = styled.button`
  ${scrollFace}
  flex: none;
  display: grid;
  place-items: center;
  width: 17px;
  height: 17px;
`;
const HThumb = styled.span`
  ${scrollFace}
  display: grid;
  place-items: center;
  width: ${(p) => p.$w}%;
  margin-right: auto;
  &::after {
    content: "";
    width: 9px;
    height: 7px;
    background: repeating-linear-gradient(90deg, #6c84b8 0, #6c84b8 1px, transparent 1px, transparent 2px);
  }
`;
const VScroll = styled.div`
  display: flex;
  flex-direction: column;
  justify-content: space-between;
  width: 17px;
  margin-left: 2px;
`;
const VThumb = styled.span`
  ${scrollFace}
  height: 11px;
  margin-bottom: 4px;
`;
const CHEV = { left: "M8 2L4 6l4 4", right: "M4 2l4 4-4 4", up: "M2 8l4-4 4 4", down: "M2 4l4 4 4-4" };
function Chevron({ dir, color = "#1c4c98", size = 12 }) {
  return (
    <Svg viewBox="0 0 12 12" $size={size} aria-hidden="true">
      <path d={CHEV[dir]} fill="none" stroke={color} strokeWidth="2.4" />
    </Svg>
  );
}

const Splitter = styled.div`
  display: flex;
  align-items: center;
  gap: 5px;
  height: 13px;
  &::before, &::after { content: ""; flex: 1; height: 1px; background: #b0b0b0; }
`;
const SplitGrip = styled.span`
  width: 24px;
  height: 6px;
  border: 1px solid #aaa;
  background: #ddd;
`;
const Details = styled.div`
  display: flex;
  height: 49px;
  overflow: hidden;
`;
const Sections = styled.div`
  flex: 1;
  overflow: hidden;
  background: #e0e0e0;
`;
const SectionHead = styled.button`
  display: block;
  width: 100%;
  height: 22px;
  padding: 0 7px;
  border: 0;
  border-right: 1px solid #999;
  border-bottom: 1px solid #888;
  background: linear-gradient(#f8f8f8, #dadada);
  color: #111;
  text-align: left;
  font: bold 12px/20px ${CJK};
`;
const BottomScroll = styled(HScroll)`
  margin: 1px 18px 0 0;
`;

/* ---------- graphics area ---------- */
const Canvas = styled.main`
  position: relative;
  flex: 1;
  min-width: 0;
  overflow: hidden;
  border-left: 4px solid #7c7f78;
  background: #000;
`;
const Drawing = styled.svg`
  display: block;
`;
const Status = styled.p`
  position: absolute;
  left: 3px;
  bottom: 0;
  margin: 0;
  color: #f4a272;
  font: 500 14px/18px "Noto Sans", sans-serif;
`;
const CadText = styled.text`
  fill: ${(p) => p.$fill || "#3cd048"};
  font-family: ${(p) => (p.$mono ? '"Liberation Mono", monospace' : 'Roboto, "Liberation Sans", sans-serif')};
  font-weight: ${(p) => (p.$mono ? 400 : 300)};
  font-size: ${(p) => p.$size}px;
`;

const HATCH_STEP = 13.6;
function hatch(start, from, to, top, bottom) {
  let d = "";
  for (let s = start; s < to; s += HATCH_STEP) {
    if (s >= from) d += `M${s - top} ${top}L${s - bottom} ${bottom}`;
  }
  return d;
}

function PartDrawing() {
  return (
    <Drawing width="1023" height="797" viewBox="195 118 1023 797" role="img" aria-label="Section A-A">
      <defs>
        <clipPath id="rim"><path d="M595 164H675V170H688V164H701L709 173V178L705 183H590L586 178V173z" /></clipPath>
        <clipPath id="web"><path d="M590 446H705L710 451V667H604V637L585 620V451z" /></clipPath>
        <clipPath id="foot"><path d="M604 729H710V755L695 770H585V746H604z" /></clipPath>
        <clipPath id="paper"><path d="M307 460h72v285h-72z" /></clipPath>
      </defs>
      <path d="M555.5 118V799.5H739.5V118" fill="none" stroke="#8a8a8a" />
      <g stroke="#f0f0a0" fill="none">
        <path clipPath="url(#rim)" d={hatch(760, 740, 900, 164, 183)} />
        <path clipPath="url(#web)" d={hatch(1028, 1020, 1400, 446, 668)} />
        <path clipPath="url(#foot)" d={hatch(1327.5, 1310, 1470, 729, 770)} />
      </g>
      <g stroke="#fff" strokeWidth="2" fill="none">
        <path d="M585 118V769L586 770H695L710 755V118" />
        <path d="M595 118V164M700 118V164M595 164H675M688 164H701M675 118V171H688V118" />
        <path d="M595 164l-9 9M586 178l4 5M701 164l8 9M709 178l-4 5M590 183H705M590 183V446M705 183V446M590 446H705M590 446l-5 5M705 446l5 5" />
        <path d="M585 620l19 17V746H585M595 629V648H604M595 648l-9 8M604 667H710M604 729H710" />
      </g>
      <g stroke="#3cc4cc" fill="none">
        <path d="M427 314.5H581M426 745.5H581M435.5 315V745" />
        <path d="M581 455L525 511.5H486M713 455L767 507.5H805" />
      </g>
      <path d="M435.5 315l3 11h-6zM435.5 745l3-11h-6z" fill="#3ce0e0" />
      <path d="M389.5 492.5h65v74h-65z" fill="none" stroke="#c82028" />
      <path d="M573 697.5h70M650 697.5h14M671 697.5h70" fill="none" stroke="#d03038" />
      <path d="M417.5 532.5h17v12h-17z" fill="none" stroke="#3cd048" />
      <CadText $size={18} transform="translate(434 531) rotate(-90)">90</CadText>
      <CadText $size={14} x="485" y="509">1X45°</CadText>
      <CadText $size={14} x="768" y="505">1X45°</CadText>
      <CadText $mono $size={20} x="574" y="855">SECTION</CadText>
      <CadText $mono $size={27} x="670" y="855">A-A</CadText>
      <g clipPath="url(#paper)">
        <path d="M307 460h72v285h-72z" fill="#fff" />
        <path d="M360 475V727M348 727H379" stroke="#111" strokeWidth="1.5" />
        <path d="M360 727l-2-12h4z" fill="#111" stroke="#111" />
        <CadText $size={13} $fill="#222" transform="translate(355 524) rotate(-90)">φ180</CadText>
        <CadText $size={9} $fill="#222" transform="translate(344 501) rotate(-90)">+0.04</CadText>
        <CadText $size={9} $fill="#222" transform="translate(355 493) rotate(-90)">0</CadText>
        <CadText $size={13} $fill="#222" transform="translate(385 513) rotate(-90)">135</CadText>
      </g>
    </Drawing>
  );
}

const BottomBar = styled(Bar)`
  height: ${(p) => p.$h}px;
  align-items: center;
  border-top: 1px solid ${(p) => (p.$first ? "#fff" : "#999")};
  background: linear-gradient(#ececec, #d0d0d0);
`;
const BottomGroup = styled(Group)`
  height: 100%;
  padding-left: ${(p) => (p.$open ? 2 : 0)}px;
  background: none;
`;

const MENUS = [["文件", "F"], ["编辑", "E"], ["视图", "V"], ["插入", "S"], ["格式", "R"], ["工具", "T"], ["装配", "A"], ["信息", "I"], ["分析", "L"], ["首选项", "P"], ["窗口", "O"], ["帮助", "H"]];
const ROW1 = [
  "fit grayBox zoomWin zoom pan cubeA cubeB wireA wireB wireC yin blob > square > | section .",
  "wrench run swap pick swap2 | measure angle .",
];
const ROW2 = [
  "sheetNew | viewAdd projView detail secA | secB secC breakout | update | brk .",
  "dimA > dimB radius ordinate > crosshair .",
  "note textA pencil datum balloon area ident cross trim sym weld hammer image .",
  "center bolt symline cyl .",
  "fontA styleW sheetEd camA camB wrenchB tee .",
  "tabA tabB | paintQ .",
];
const TABS = [["asm"], ["part", "on"], ["reuse"], ["web", "", 1], ["clock", "", 1], ["roles"], ["users"], ["winP"], ["3D"]];

export default function App() {
  return (
    <Window>
      <GlobalStyle />
      <TitleBar>
        <Icon name="nx" size={17} />
        <Title>NX 6 - Drafting - [xingxingpan.prt <TitleHan>（修改的）</TitleHan>  ]</Title>
        <Brand>SIEMENS</Brand>
        <Minimize aria-label="Minimize" />
      </TitleBar>
      <MenuBar>
        <MenuLead><Grip /><Icon name="modeMenu" /></MenuLead>
        {MENUS.map(([name, key]) => (
          <MenuItem key={key}><Han>{name}</Han>(<u>{key}</u>)</MenuItem>
        ))}
      </MenuBar>
      <Bars>
        <Bar>
          <Group>
            <Grip />
            <StartButton><Icon name="nx" /><Han>开始</Han><Caret /></StartButton>
            <Tools list="doc folder save | cut copy paste del | undo redo | info | find ." />
          </Group>
          <Group $gap={32}><Grip /><Tools list={ROW1[0]} /></Group>
          <Group><Grip /><Tools list={ROW1[1]} /></Group>
        </Bar>
        <Bar>
          {ROW2.map((list, i) => (
            <Group key={i} $gap={i ? 1 : 0}><Grip /><Tools list={list} /></Group>
          ))}
        </Bar>
        <BarEdge>
          <Collapse aria-label="Collapse"><Chevron dir="left" color="#333" /></Collapse>
          <EdgeEnd />
        </BarEdge>
      </Bars>
      <Body>
        <Rail>
          {TABS.map(([name, on, apart]) => (
            <RailTab key={name} $on={!!on} $apart={apart} aria-label={name}>
              {name === "3D" ? <ThreeD>3D</ThreeD> : <Icon name={name} />}
            </RailTab>
          ))}
        </Rail>
        <Panel>
          <PanelHead>
            <PinButton aria-label="Pin"><Icon name="pin" size={13} /></PinButton>
            <PanelTitle>部件导航器</PanelTitle>
          </PanelHead>
          <TreeBox>
            <ColumnHead><Han>名称</Han><SortUp /></ColumnHead>
            <Rows>{TREE.map((row, i) => <TreeRow key={i} row={row} />)}</Rows>
            <HScroll>
              <ScrollButton aria-label="Left"><Chevron dir="left" /></ScrollButton>
              <HThumb $w={32} />
              <ScrollButton aria-label="Right"><Chevron dir="right" /></ScrollButton>
            </HScroll>
          </TreeBox>
          <Splitter><SplitGrip /></Splitter>
          <Details>
            <Sections>
              <SectionHead>相关性</SectionHead>
              <SectionHead>细节</SectionHead>
            </Sections>
            <VScroll>
              <ScrollButton aria-label="Up"><Chevron dir="up" /></ScrollButton>
              <VThumb />
              <ScrollButton aria-label="Down"><Chevron dir="down" /></ScrollButton>
            </VScroll>
          </Details>
          <BottomScroll>
            <ScrollButton aria-label="Left"><Chevron dir="left" /></ScrollButton>
            <HThumb $w={64} />
            <ScrollButton aria-label="Right"><Chevron dir="right" /></ScrollButton>
          </BottomScroll>
        </Panel>
        <Canvas>
          <PartDrawing />
          <Status>Sheet "Sheet 2" Work</Status>
        </Canvas>
      </Body>
      <BottomBar $h={28} $first>
        <BottomGroup>
          <Grip />
          <Combo w={81} value="Sheet 2" label="Sheet" after={5} />
          <Tools list="profile line arc circle corner grayTrim grayExt grayCross fillet rect spline plus | par con1 con2 con3 con4 con5 con6 con7 | add1 add2 offset grayHatch ." />
        </BottomGroup>
        <BottomGroup $gap={179}><Grip /><Tools list="anim anim ." /></BottomGroup>
      </BottomBar>
      <BottomBar $h={28}>
        <BottomGroup $open>
          <Combo w={110} value="" label="Type filter" after={4} />
          <Combo w={117} value="整个装配" label="Selection scope" after={3} han />
          <Tools list="links | selRect > back *eraser rot hookG | marquee > | *snap *endPt *midPt tan inter *cen quad *exist onCurve face | cubeA" />
        </BottomGroup>
      </BottomBar>
    </Window>
  );
}
